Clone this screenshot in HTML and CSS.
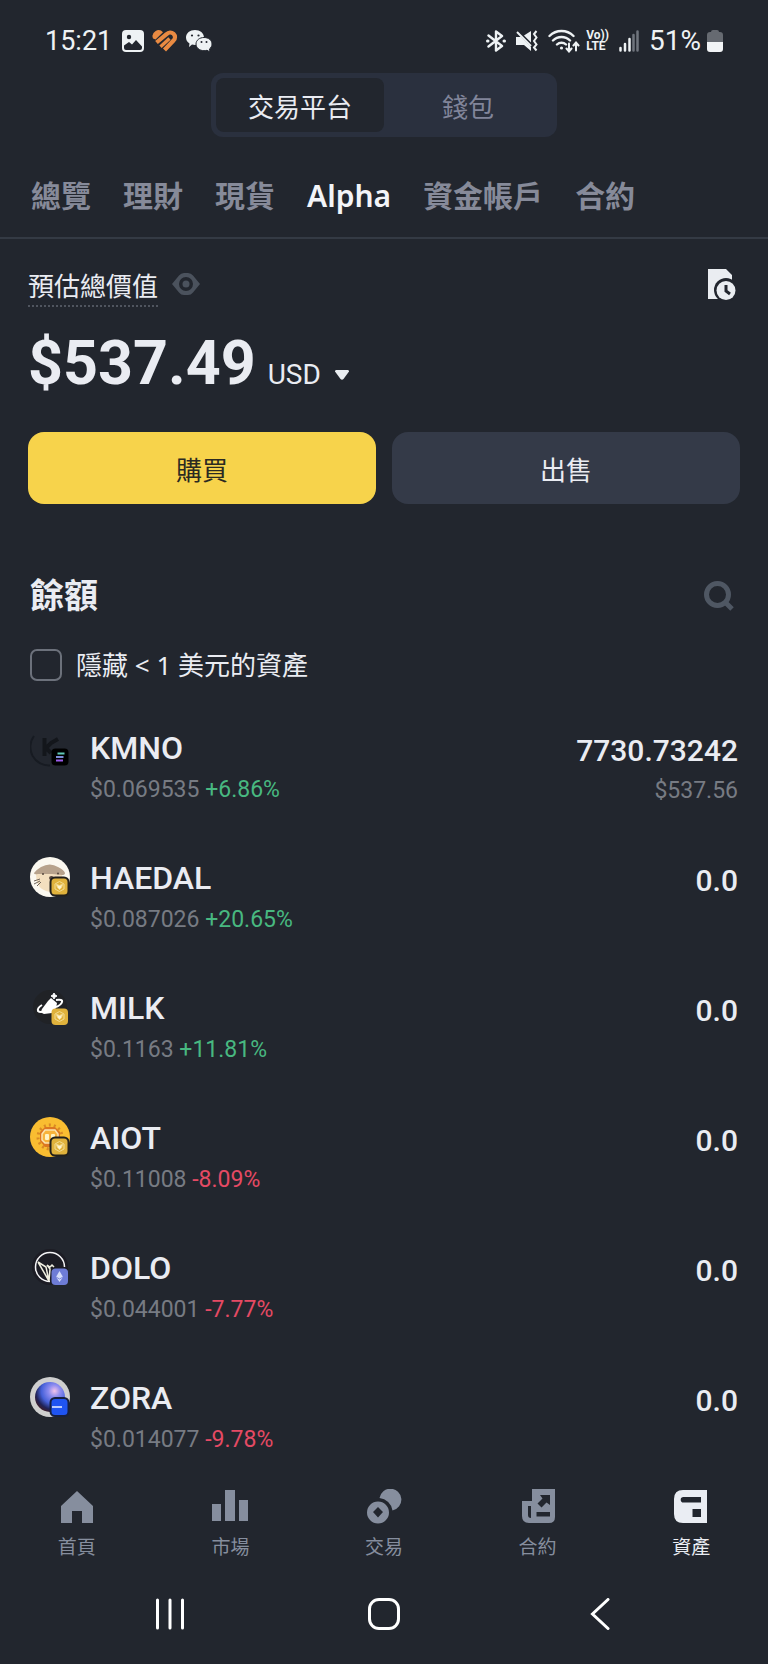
FILE: index.html
```html
<!DOCTYPE html>
<html lang="zh-Hant">
<head>
    <meta charset="UTF-8">
    <meta name="viewport" content="width=device-width, initial-scale=1.0">
    <title>資產</title>
    <link rel="stylesheet" href="styles.css">
</head>
<body>
    <div class="status-bar">
        <div class="status-left">
            <span class="clock">15:21</span>
            <svg width="22" height="22" viewBox="0 0 22 22">
                <rect width="22" height="22" rx="4" fill="#eef2f4"/>
                <circle cx="7" cy="7" r="2.2" fill="#22262e"/>
                <path d="M2 15.5L7 12l3 2.5 4-4.5 6 6.5v1.500a2 2 0 0 1-2 2H4a2 2 0 0 1-2-2z" fill="#22262e"/>
            </svg>
            <svg width="26" height="22" viewBox="0 0 26 22" fill="none" stroke="#e98a42" stroke-width="4.200">
                <path d="M1 8.500A6 6 0 0 1 11 2.200L3.500 9.500z" fill="#e98a42" stroke="none"/>
                <path d="M4.500 12.500L14.500 4.200c2-2 5-2.200 7-.4 2 2 2 4.700 0 6.700L12.500 20"/>
                <path d="M8.500 16.800L17.500 8.500" stroke-width="3.400"/>
            </svg>
            <svg width="26" height="22" viewBox="0 0 26 22" fill="#eef2f4">
                <path d="M9 0c5 0 9 3 9 7.500S14 15 9 15c-1 0-2-.1-3-.4L3 17l.5-3.500C1.300 12 0 10 0 7.500 0 3 4 0 9 0z"/>
                <path d="M18 7.500c4.500 0 8 2.800 8 6.500 0 2-1 3.700-2.500 4.900l.5 3-3-1.600c-1 .2-2 .4-3 .4-4.500 0-8-3-8-6.700s3.500-6.500 8-6.500z" stroke="#22262e" stroke-width="1"/>
                <g fill="#22262e"><circle cx="6" cy="5.500" r="1.100"/><circle cx="12.500" cy="5.500" r="1.100"/><circle cx="15.500" cy="12" r="1"/><circle cx="20.500" cy="12" r="1"/></g>
            </svg>
        </div>
        <div class="status-right">
            <svg width="20" height="22" viewBox="0 0 20 22" fill="none" stroke="#eef2f4" stroke-width="2.400" stroke-linejoin="round" stroke-linecap="round">
                <path d="M2.500 5.500L16 16l-6 4.500v-19L16 6 2.500 16.500"/>
                <path d="M1.500 11h.5M18 11h.5" stroke-width="3"/>
            </svg>
            <svg width="22" height="22" viewBox="0 0 22 22" fill="#eef2f4">
                <path d="M0 7h5l10 10v4l-7-6H0z"/>
                <path d="M8 5.500L15 1v11.500z"/>
                <path d="M1 2l14 14" stroke="#eef2f4" stroke-width="2"/>
                <path d="M20.500 1l-2.500 3 2.500 3.500-2.500 3.500 2.500 3.500-2.500 3 2.500 3" fill="none" stroke="#eef2f4" stroke-width="2"/>
            </svg>
            <svg width="32" height="24" viewBox="0 0 32 24" fill="none" stroke="#eef2f4" stroke-width="2.400" stroke-linecap="round">
                <path d="M1.500 7a17 17 0 0 1 24 0M5 11.500a12 12 0 0 1 17 0M9 15.500a6.500 6.500 0 0 1 9 0"/>
                <circle cx="13.500" cy="19" r="1.600" fill="#eef2f4" stroke="none"/>
                <path d="M21 14.500V22m-2.500-2.500L21 22.500l2.500-3M28 21.500V14m-2.500 2.500l2.500-3 2.500 3" stroke-width="2"/>
            </svg>
            <div class="volte"><span>Vo))</span><span>LTE</span></div>
            <svg width="20" height="22" viewBox="0 0 20 22" stroke-width="2.500" stroke-linecap="round">
                <path d="M1.500 18v2.500M6 14v6.500M10.500 9v11.500" stroke="#eef2f4"/>
                <path d="M14.500 5v15.500M18.500 1.500v19" stroke="#70757d"/>
            </svg>
            <span class="battery-level">51%</span>
            <svg width="16" height="22" viewBox="0 0 16 22">
                <path d="M4 2q0-2 2-2h4q2 0 2 2h1q3 0 3 3v7H0V5q0-3 3-3z" fill="#666a71"/>
                <path d="M0 12h16v7q0 3-3 3H3q-3 0-3-3z" fill="#f2f4f6"/>
            </svg>
        </div>
    </div>

    <header class="switcher">
        <button class="switch active">交易平台</button>
        <button class="switch">錢包</button>
    </header>

    <nav class="tabs">
        <a href="#">總覽</a>
        <a href="#">理財</a>
        <a href="#">現貨</a>
        <a href="#" class="active">Alpha</a>
        <a href="#">資金帳戶</a>
        <a href="#">合約</a>
    </nav>

    <main>
        <section class="summary">
            <div class="summary-head">
                <span class="summary-label">預估總價值</span>
                <button class="icon-btn eye" aria-label="隱藏">
                    <svg width="28" height="22" viewBox="0 0 28 22">
                        <path fill-rule="evenodd" d="M0 11l7-8.500Q9 0 12 0h4q3 0 5 2.500L28 11l-7 8.500Q19 22 16 22h-4q-3 0-5-2.500zM14 4a7 7 0 1 0 0 14 7 7 0 0 0 0-14z" fill="#4b525d"/>
                        <circle cx="14" cy="11" r="3.500" fill="#4b525d"/>
                    </svg>
                </button>
                <button class="icon-btn history" aria-label="記錄">
                    <svg width="28" height="32" viewBox="0 0 28 32">
                        <path d="M0 0h18l6 6v8H10v16H0z" fill="#eaedf1"/>
                        <circle cx="18" cy="21" r="12" fill="#22262e"/>
                        <circle cx="18" cy="21.500" r="9.500" fill="#eaedf1"/>
                        <path d="M18 16v6l4 3" fill="none" stroke="#22262e" stroke-width="3"/>
                    </svg>
                </button>
            </div>
            <div class="total">
                <span class="total-value">$537.49</span>
                <button class="currency">USD
                    <svg width="14" height="10" viewBox="0 0 14 10"><path d="M1 0h12q1 0 1 1.500L8.500 9q-1.500 1.500-3 0L0 1.500Q0 0 1 0z" fill="#eaedf1"/></svg>
                </button>
            </div>
            <div class="actions">
                <button class="btn buy">購買</button>
                <button class="btn sell">出售</button>
            </div>
        </section>

        <section class="balances">
            <div class="balances-head">
                <h2>餘額</h2>
                <button class="icon-btn" aria-label="搜尋">
                    <svg width="30" height="30" viewBox="0 0 30 30" fill="none" stroke="#4f5763" stroke-width="5">
                        <circle cx="13.500" cy="13.500" r="11"/><path d="M21 21l7 7"/>
                    </svg>
                </button>
            </div>
            <label class="hide-small"><input type="checkbox">隱藏 &lt; 1 美元的資產</label>

            <ul class="coins">
                <li class="coin">
                    <svg class="coin-icon" viewBox="0 0 40 40">
                        <path d="M20 38.500A18.500 18.500 0 0 1 4 9" fill="none" stroke="#171b22" stroke-width="2"/>
                        <path d="M14.500 11v18M28 12l-7 4-5 5 5 5" fill="none" stroke="#13161b" stroke-width="4"/>
                        <rect x="21.500" y="21.500" width="17" height="17" rx="4" fill="#000"/>
                        <path d="M27.500 26.500h7" stroke="#5fc9b5" stroke-width="2"/>
                        <path d="M26 30h7.500" stroke="#7d8ed8" stroke-width="2"/>
                        <path d="M26 33.500h7" stroke="#9b5bea" stroke-width="2"/>
                    </svg>
                    <div class="coin-info">
                        <span class="coin-name">KMNO</span>
                        <span class="coin-price">$0.069535 <span class="up">+6.86%</span></span>
                    </div>
                    <div class="coin-holding">
                        <span class="amount">7730.73242</span>
                        <span class="value">$537.56</span>
                    </div>
                </li>
                <li class="coin">
                    <svg class="coin-icon" viewBox="0 0 40 40">
                        <circle cx="20" cy="20" r="20" fill="#fbf8f0"/>
                        <path d="M6 17h26q2 15-3 16-8 5-17-1-6-4-6-15z" fill="#f3dfbf"/>
                        <path d="M4 16q2-3 7-6 9-5 17 0 6 3 7 6 0 2-3 2l-10-1H8q-4 1-4-1z" fill="#b7a28c"/>
                        <g fill="#54463c"><circle cx="13" cy="17" r="1"/><circle cx="28" cy="16.500" r="1"/><ellipse cx="21.500" cy="21" rx="2.500" ry="2"/></g>
                        <path d="M4 24l6-2M4 27l6-3M7 29l4-4" stroke="#6e6358" stroke-width="1"/>
                        <rect x="20.500" y="20.500" width="18" height="18" rx="4.500" fill="#e0b23c" stroke="#22201c" stroke-width="2"/>
                        <g class="bnb"><path d="M29.500 24.500l4.500 2.500v5l-4.500 2.500L25 32v-5z"/><path class="core" d="M26.500 27.500l3 1 3-1-1 3-2 2-2-2z"/></g>
                    </svg>
                    <div class="coin-info">
                        <span class="coin-name">HAEDAL</span>
                        <span class="coin-price">$0.087026 <span class="up">+20.65%</span></span>
                    </div>
                    <div class="coin-holding"><span class="amount">0.0</span></div>
                </li>
                <li class="coin">
                    <svg class="coin-icon" viewBox="0 0 40 40">
                        <circle cx="20" cy="20" r="17" fill="#202226"/>
                        <path d="M12 22l6-8 3-3 6 5-1 5-4 5-8 1q-4-1-2-5z" fill="#fff"/>
                        <path d="M26 13q7-1 6 2-1 3-6 5M12 18q-5 3-4 6 2 2 8 0" fill="none" stroke="#fff" stroke-width="2"/>
                        <path d="M24 6l1 2 2 1-2 1-1 2-1-2-2-1 2-1z" fill="#fff" stroke="#fff"/>
                        <rect x="21.500" y="21.500" width="16.500" height="16.500" rx="4" fill="#e0b23c"/>
                        <g class="bnb"><path d="M29.500 24.500l4.500 2.500v5l-4.500 2.500L25 32v-5z"/><path class="core" d="M26.500 27.500l3 1 3-1-1 3-2 2-2-2z"/></g>
                    </svg>
                    <div class="coin-info">
                        <span class="coin-name">MILK</span>
                        <span class="coin-price">$0.1163 <span class="up">+11.81%</span></span>
                    </div>
                    <div class="coin-holding"><span class="amount">0.0</span></div>
                </li>
                <li class="coin">
                    <svg class="coin-icon" viewBox="0 0 40 40">
                        <circle cx="20" cy="20" r="20" fill="#f9bd31"/>
                        <circle cx="20" cy="20" r="12" fill="none" stroke="#d98a25" stroke-width="3" stroke-dasharray="2 3"/>
                        <path d="M15 10h10l5 5v9l-5 6H15l-5-6v-9z" fill="#dc7722"/>
                        <path d="M15 13h10l3 4v6l-3 3H15l-3-3v-6z" fill="#f8b33b" stroke="#fbe3ae" stroke-width="1.500"/>
                        <rect x="15" y="17" width="4" height="6" rx="1" fill="#fff3c4"/><rect x="21" y="17" width="4" height="6" rx="1" fill="#fff3c4"/>
                        <rect x="20.500" y="20.500" width="18" height="18" rx="4.500" fill="#e0b23c" stroke="#22201c" stroke-width="2"/>
                        <g class="bnb"><path d="M29.500 24.500l4.500 2.500v5l-4.500 2.500L25 32v-5z"/><path class="core" d="M26.500 27.500l3 1 3-1-1 3-2 2-2-2z"/></g>
                    </svg>
                    <div class="coin-info">
                        <span class="coin-name">AIOT</span>
                        <span class="coin-price">$0.11008 <span class="down">-8.09%</span></span>
                    </div>
                    <div class="coin-holding"><span class="amount">0.0</span></div>
                </li>
                <li class="coin">
                    <svg class="coin-icon" viewBox="0 0 40 40">
                        <circle cx="20" cy="20" r="18" fill="#1c1c24"/>
                        <path d="M20 34.500A14.500 14.500 0 1 1 34.500 20" fill="none" stroke="#f4f4f6" stroke-width="1.500"/>
                        <path d="M8 15l11 19M8 15l8 5 3 14 1-12-3-4 3 2 2-2 2 2" fill="none" stroke="#efeee0" stroke-width="1.500"/>
                        <rect x="21.500" y="21.500" width="16.500" height="16.500" rx="4" fill="#6e7cd6"/>
                        <path d="M29.500 24l3.500 6-3.500 5-3.500-5z" fill="#d6defa"/>
                        <path d="M26 30l3.500 2 3.500-2" stroke="#7987dc" fill="none"/>
                    </svg>
                    <div class="coin-info">
                        <span class="coin-name">DOLO</span>
                        <span class="coin-price">$0.044001 <span class="down">-7.77%</span></span>
                    </div>
                    <div class="coin-holding"><span class="amount">0.0</span></div>
                </li>
                <li class="coin">
                    <svg class="coin-icon" viewBox="0 0 40 40">
                        <defs>
                            <radialGradient id="orb" cx="24.500" cy="14" r="24" gradientUnits="userSpaceOnUse">
                                <stop offset="0" stop-color="#f3c3ea"/>
                                <stop offset=".25" stop-color="#8d8cf0"/>
                                <stop offset=".55" stop-color="#4560d8"/>
                                <stop offset=".78" stop-color="#202358"/>
                                <stop offset="1" stop-color="#4a1a14"/>
                            </radialGradient>
                        </defs>
                        <circle cx="20" cy="20" r="20" fill="#cfcfcf"/>
                        <circle cx="20" cy="20" r="15" fill="url(#orb)"/>
                        <rect x="20.500" y="21" width="18" height="18" rx="4.500" fill="#1f54f2" stroke="#17203f" stroke-width="2"/>
                        <path d="M22 30h10" stroke="#b9cbff" stroke-width="2"/>
                    </svg>
                    <div class="coin-info">
                        <span class="coin-name">ZORA</span>
                        <span class="coin-price">$0.014077 <span class="down">-9.78%</span></span>
                    </div>
                    <div class="coin-holding"><span class="amount">0.0</span></div>
                </li>
            </ul>
        </section>
    </main>

    <nav class="bottom-nav">
        <a href="#">
            <svg width="36" height="36" viewBox="0 0 36 36"><path d="M18 2l16 15v17H23V22H13v12H2V17z"/></svg>
            首頁
        </a>
        <a href="#">
            <svg width="36" height="36" viewBox="0 0 36 36"><path d="M0 15h9v17H0zM13 1h10v31H13zM27 11h9v21h-9z"/></svg>
            市場
        </a>
        <a href="#">
            <svg width="36" height="36" viewBox="0 0 36 36">
                <path d="M13.500 9A11 11 0 1 1 26.500 21.500 14.500 14.500 0 0 0 13.500 9z"/>
                <path fill-rule="evenodd" d="M12 12.500a11 11 0 1 0 0 22 11 11 0 0 0 0-22zm0 5.500l5 5-5 5.500-5-5.500z"/>
            </svg>
            交易
        </a>
        <a href="#">
            <svg width="36" height="36" viewBox="0 0 36 36">
                <path fill-rule="evenodd" d="M12 0h23v28q0 6-6 6H9q-7 0-7-7V12h10zM8 17v9q0 3 3 3V17zM16.500 23v4.500H30V23zM20 6l2.500 3.500-5 5 4 4 5-5L30 16V6z"/>
            </svg>
            合約
        </a>
        <a href="#" class="active">
            <svg width="36" height="36" viewBox="0 0 36 36">
                <path fill-rule="evenodd" d="M10 1h24v33H10q-9 0-9-9V10q0-9 9-9zM10.500 8a2.800 2.800 0 0 0 0 5.600H28V8zM19.500 20v8H28v-8z"/>
            </svg>
            資產
        </a>
    </nav>

    <div class="system-nav">
        <button class="icon-btn" aria-label="最近">
            <svg width="32" height="32" viewBox="0 0 32 32" stroke="#fff" stroke-width="3" stroke-linecap="round"><path d="M3.500 2v28M16 2v28M28.500 2v28"/></svg>
        </button>
        <button class="icon-btn" aria-label="主畫面">
            <svg width="32" height="32" viewBox="0 0 32 32" fill="none" stroke="#fff" stroke-width="3"><rect x="1.500" y="1.500" width="29" height="29" rx="9.500"/></svg>
        </button>
        <button class="icon-btn" aria-label="返回">
            <svg width="32" height="32" viewBox="0 0 32 32" fill="none" stroke="#fff" stroke-width="3" stroke-linecap="round"><path d="M26 1.500L10.500 16 26 30.500"/></svg>
        </button>
    </div>
</body>
</html>
```
FILE: styles.css
```css
* {
    box-sizing: border-box;
}
body {
    margin: 0;
    background-color: #22262e;
    color: #eaecf2;
    font-family: Roboto, "Noto Sans CJK TC", sans-serif;
    font-size: 26px;
}
button {
    border: none;
    padding: 0;
    background: none;
    color: inherit;
    font: inherit;
    cursor: pointer;
}
a {
    color: inherit;
    text-decoration: none;
}
svg {
    display: block;
    flex-shrink: 0;
}
.icon-btn {
    display: block;
}

/* status bar */
.status-bar {
    display: flex;
    justify-content: space-between;
    align-items: center;
    height: 73px;
    padding: 8px 45px 0;
    color: #eef2f4;
    font-size: 28px;
}
.status-left,
.status-right {
    display: flex;
    align-items: center;
    gap: 10px;
}
.status-left {
    gap: 8px;
}
.clock,
.battery-level {
    line-height: 32px;
}
.clock {
    margin-right: 2px;
    font-size: 27px;
}
.battery-level {
    margin-right: -4px;
}
.volte {
    display: flex;
    flex-direction: column;
    margin-left: -4px;
    font-size: 12px;
    font-weight: bold;
    line-height: 11px;
}

/* exchange / wallet switch */
.switcher {
    display: grid;
    grid-template-columns: 1fr 1fr;
    width: 346px;
    margin: 0 auto;
    padding: 5px;
    border-radius: 12px;
    background-color: #2a303e;
}
.switch {
    height: 54px;
    border-radius: 8px;
    color: #81859a;
}
.switch.active {
    background-color: #22262e;
    color: #eaecf2;
}

.tabs {
    display: flex;
    gap: 32px;
    padding: 38px 31px 20px;
    border-bottom: 2px solid #343a44;
    color: #868a99;
    font-family: "Noto Sans", "Noto Sans CJK TC", sans-serif;
    font-size: 30px;
    font-weight: 600;
    line-height: 42px;
}
.tabs .active {
    color: #f3f4f8;
}

/* total value */
.summary {
    padding: 28px 28px 0;
}
.summary-head {
    display: flex;
    align-items: flex-start;
    gap: 14px;
}
.summary-label {
    padding-top: 2px;
    border-bottom: 2px dotted #50555f;
    line-height: 36px;
}
.eye {
    padding-top: 6px;
}
.history {
    margin-left: auto;
    padding: 2px 4px 0 0;
}
.total {
    display: flex;
    align-items: baseline;
    gap: 12px;
    padding-top: 18px;
}
.total-value {
    font-size: 61px;
    font-weight: bold;
    line-height: 76px;
}
.currency {
    display: flex;
    align-items: center;
    gap: 14px;
    font-size: 28px;
    line-height: 32px;
}
.actions {
    display: grid;
    grid-template-columns: 1fr 1fr;
    gap: 16px;
    padding-top: 31px;
}
.btn {
    height: 72px;
    border-radius: 16px;
}
.buy {
    background-color: #f7d34b;
    color: #2b2a22;
}
.sell {
    background-color: #343a48;
}

/* balances */
.balances {
    padding: 67px 30px 0;
}
.balances-head {
    display: flex;
    justify-content: space-between;
    align-items: center;
    padding-right: 4px;
}
.balances-head h2 {
    margin: 0;
    font-size: 34px;
    line-height: 50px;
}
.hide-small {
    display: flex;
    align-items: center;
    gap: 14px;
    padding-top: 26px;
    font-family: "Noto Sans", "Noto Sans CJK TC", sans-serif;
    line-height: 36px;
}
.hide-small input {
    appearance: none;
    width: 32px;
    height: 32px;
    margin: 0;
    border: 2px solid #6c717b;
    border-radius: 7px;
}
.coins {
    display: flex;
    flex-direction: column;
    gap: 46px;
    margin: 0;
    padding: 44px 0 0;
    list-style: none;
}
.coin {
    display: flex;
    align-items: flex-start;
    gap: 20px;
}
.coin-icon {
    width: 40px;
    height: 40px;
}
.coin-info,
.coin-holding {
    display: flex;
    flex-direction: column;
}
.coin-holding {
    margin-left: auto;
    padding-top: 4px;
    text-align: right;
}
.coin-name {
    font-size: 32px;
    font-weight: 500;
    line-height: 42px;
}
.coin-price,
.value {
    color: #777b83;
    font-size: 23px;
}
.coin-price {
    line-height: 42px;
}
.amount {
    font-size: 30px;
    font-weight: 500;
    line-height: 40px;
}
.value {
    line-height: 40px;
}
.up {
    color: #48b880;
}
.down {
    color: #e54a64;
}
.bnb {
    fill: none;
    stroke: #f3dc92;
    stroke-width: 1;
}
.bnb .core {
    fill: #fff3cc;
}

/* bottom navigation */
.bottom-nav {
    display: grid;
    grid-template-columns: repeat(5, 1fr);
    padding-top: 28px;
    color: #868e9e;
    font-size: 19px;
    line-height: 26px;
}
.bottom-nav a {
    display: flex;
    flex-direction: column;
    align-items: center;
    gap: 10px;
}
.bottom-nav svg {
    fill: currentColor;
}
.bottom-nav .active {
    color: #eaedf3;
}
.system-nav {
    display: grid;
    grid-template-columns: repeat(3, 1fr);
    justify-items: center;
    padding: 37px 63px 34px;
}
```
